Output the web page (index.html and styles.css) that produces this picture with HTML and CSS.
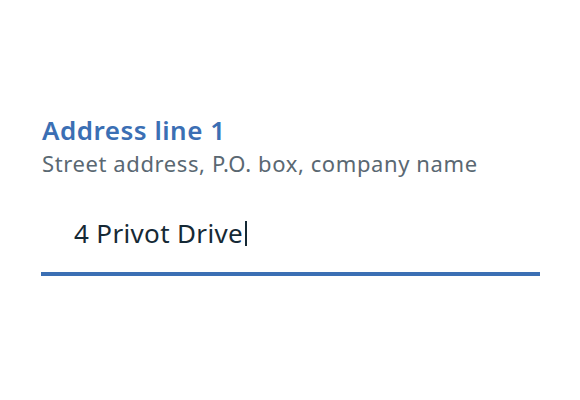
FILE: index.html
```html
<!DOCTYPE html>
<html>
<head>
<meta charset="utf-8">
<link rel="stylesheet" href="styles.css">
</head>
<body>
<div class="field">
  <label class="label">Address line 1</label>
  <div class="helper">Street address, P.O. box, company name</div>
  <div class="input"><span class="value">4 Privot Drive</span><span class="caret"></span></div>
</div>
</body>
</html>
```

FILE: styles.css
```css
html, body {
  margin: 0;
  padding: 0;
  background: #ffffff;
  width: 580px;
  height: 400px;
  overflow: hidden;
}
body {
  font-family: "Noto Sans", "Open Sans", sans-serif;
}
.field {
  padding: 113px 40px 0 41px;
  display: flex;
  flex-direction: column;
}
.label {
  font-size: 26px;
  font-weight: 600;
  color: #3b6fb4;
  line-height: 34px;
  letter-spacing: 0.5px;
  padding-left: 1px;
}
.helper {
  font-size: 22px;
  color: #5a6872;
  line-height: 32px;
  letter-spacing: 0.6px;
  padding-left: 1px;
}
.input {
  margin-top: 37px;
  padding: 0 0 22px 33px;
  font-size: 26px;
  color: #152935;
  line-height: 34px;
  letter-spacing: 0.35px;
  border-bottom: 4px solid #3b6fb4;
  display: flex;
  align-items: center;
}
.caret {
  display: inline-block;
  width: 1.5px;
  height: 25px;
  margin-left: 2px;
  margin-top: 1px;
  background: #152935;
}
```
